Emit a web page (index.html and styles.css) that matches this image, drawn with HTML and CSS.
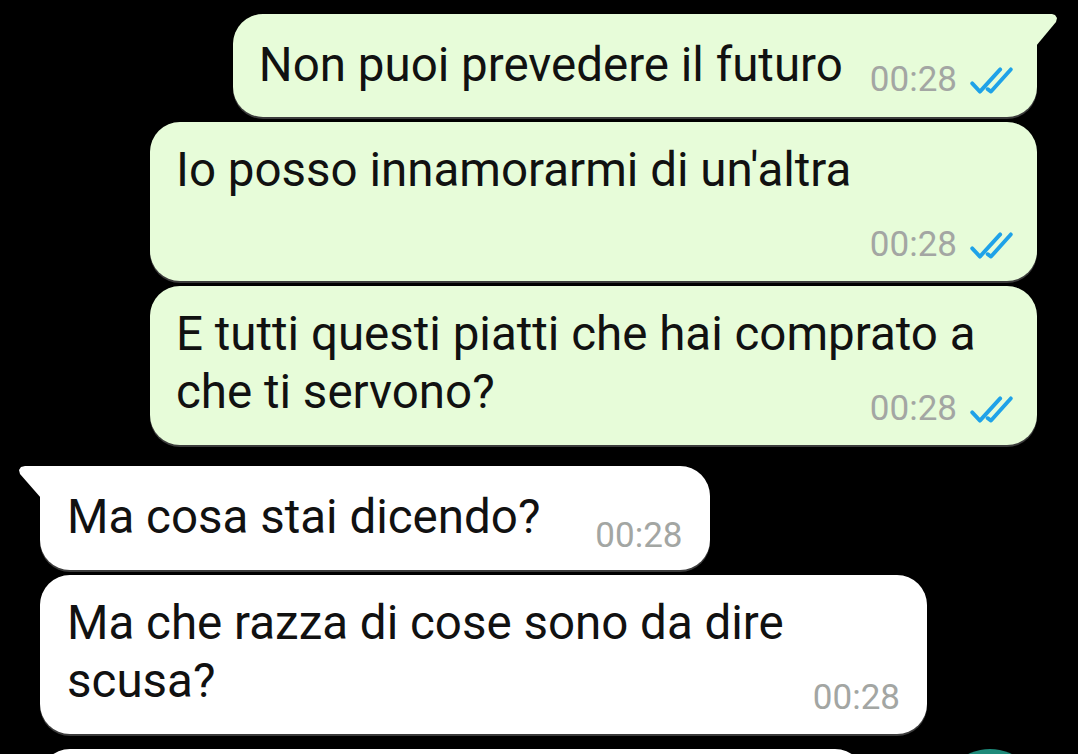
FILE: index.html
```html
<!DOCTYPE html>
<html>
<head>
  <meta charset="utf-8">
  <title>Chat</title>
  <link rel="stylesheet" href="styles.css">
</head>
<body>
  <div class="chat">
    <div class="bubble out tail inline">
      <span class="text">Non puoi prevedere il futuro</span>
      <span class="meta"><span class="time">00:28</span><svg class="ticks" viewBox="0 0 44 28"><path d="M2 17 L10 25.5 L31 2.5 M18 23 L21.5 25.5 L42 2.5"/></svg></span>
    </div>
    <div class="bubble out wide">
      <div class="text two-lines">Io posso innamorarmi di un'altra</div>
      <div class="meta"><span class="time">00:28</span><svg class="ticks" viewBox="0 0 44 28"><path d="M2 17 L10 25.5 L31 2.5 M18 23 L21.5 25.5 L42 2.5"/></svg></div>
    </div>
    <div class="bubble out wide">
      <div class="text">E tutti questi piatti che hai comprato a che ti servono?</div>
      <div class="meta"><span class="time">00:28</span><svg class="ticks" viewBox="0 0 44 28"><path d="M2 17 L10 25.5 L31 2.5 M18 23 L21.5 25.5 L42 2.5"/></svg></div>
    </div>
    <div class="bubble in tail inline group">
      <span class="text">Ma cosa stai dicendo?</span>
      <span class="meta"><span class="time">00:28</span></span>
    </div>
    <div class="bubble in wide">
      <div class="text">Ma che razza di cose sono da dire scusa?</div>
      <div class="meta"><span class="time">00:28</span></div>
    </div>
    <div class="bubble in next"></div>
  </div>
  <div class="fab"></div>
</body>
</html>
```

FILE: styles.css
```css
body {
  margin: 0;
  background: #000;
  font-family: Roboto, "Noto Sans", sans-serif;
  overflow: hidden;
}

.chat {
  display: flex;
  flex-direction: column;
  gap: 5px;
  padding-top: 14px;
}

.bubble {
  position: relative;
  box-sizing: border-box;
  max-width: 887px;
  border-radius: 30px;
  padding: 19px 24px 16px 26px;
  color: #111;
  box-shadow: 0 2px 0 #3c3c3c;
}

.bubble.out {
  align-self: flex-end;
  margin-right: 41px;
  background: #e7fcd9;
}

.bubble.in {
  align-self: flex-start;
  margin-left: 40px;
  background: #fff;
  padding-left: 27px;
  padding-right: 27px;
}

.bubble.group {
  margin-top: 16px;
}

.bubble.wide {
  width: 887px;
}

.bubble.out.tail {
  border-top-right-radius: 0;
}

.bubble.in.tail {
  border-top-left-radius: 0;
}

.bubble.tail::before {
  content: "";
  position: absolute;
  top: 0;
  width: 22px;
  height: 32px;
  background: inherit;
}

.bubble.out.tail::before {
  right: -21px;
  clip-path: polygon(0 0, 16px 0, 19px 1px, 21px 4px, 20px 8px, 0 100%);
}

.bubble.in.tail::before {
  left: -21px;
  clip-path: polygon(1px 8px, 0 4px, 2px 1px, 6px 0, 22px 0, 22px 100%);
}

.text {
  font-size: 47.5px;
  line-height: 58px;
}

.text.two-lines {
  min-height: 116px;
}

.meta {
  display: flex;
  justify-content: flex-end;
  align-items: center;
  gap: 13px;
  margin-top: -32px;
  color: #a3a6a3;
  font-size: 35px;
  line-height: 40px;
}

.inline {
  display: flex;
  align-items: flex-end;
  padding-top: 22px;
  padding-bottom: 17px;
}

.inline .text {
  padding-bottom: 6px;
}

.inline .meta {
  margin-top: 0;
  margin-left: 27px;
}

.in.inline {
  padding-bottom: 18px;
}

.in.inline .meta {
  margin-left: 55px;
  margin-bottom: -4px;
}

.ticks {
  width: 43px;
  height: 27px;
  fill: none;
  stroke: #1fa2e8;
  stroke-width: 4;
  stroke-linecap: round;
  stroke-linejoin: round;
}

.bubble.next {
  width: 825px;
  height: 120px;
  margin-top: 10px;
}

.fab {
  position: absolute;
  left: 940px;
  top: 749px;
  width: 100px;
  height: 100px;
  border-radius: 50%;
  background: #1d8a7a;
}
```
